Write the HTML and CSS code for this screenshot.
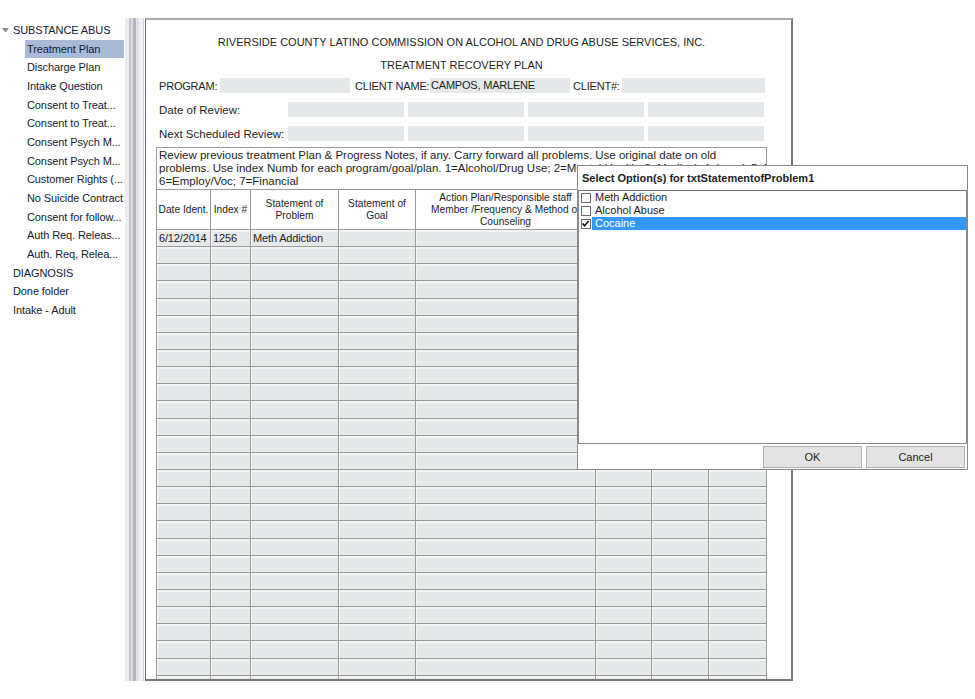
FILE: index.html
```html
<!DOCTYPE html>
<html>
<head>
<meta charset="utf-8">
<link rel="stylesheet" href="styles.css">
</head>
<body>
<div class="app">
  <nav class="tree">
    <div class="node root"><svg class="caret" width="7" height="5" viewBox="0 0 7 5"><polygon points="0,0 7,0 3.5,4.5" fill="#8a8a8a"/></svg>SUBSTANCE ABUS</div>
    <div class="node child selected">Treatment Plan</div>
    <div class="node child">Discharge Plan</div>
    <div class="node child">Intake Question</div>
    <div class="node child">Consent to Treat...</div>
    <div class="node child">Consent to Treat...</div>
    <div class="node child">Consent Psych M...</div>
    <div class="node child">Consent Psych M...</div>
    <div class="node child">Customer Rights (...</div>
    <div class="node child">No Suicide Contract</div>
    <div class="node child">Consent for follow...</div>
    <div class="node child">Auth Req. Releas...</div>
    <div class="node child">Auth. Req, Relea...</div>
    <div class="node root">DIAGNOSIS</div>
    <div class="node root">Done folder</div>
    <div class="node root">Intake - Adult</div>
  </nav>
  <div class="splitter"></div>
  <main class="doc">
    <div class="title">RIVERSIDE COUNTY LATINO COMMISSION ON ALCOHOL AND DRUG ABUSE SERVICES, INC.</div>
    <div class="subtitle">TREATMENT RECOVERY PLAN</div>
    <div class="form-row">
      <span class="lbl caps lbl-program">PROGRAM:</span>
      <span class="field f-program"></span>
      <span class="lbl caps lbl-name">CLIENT NAME:</span>
      <span class="field caps f-name">CAMPOS, MARLENE</span>
      <span class="lbl caps lbl-num">CLIENT#:</span>
      <span class="field f-num"></span>
    </div>
    <div class="form-row dates">
      <span class="lbl lbl-date">Date of Review:</span>
      <span class="field f-date"></span>
      <span class="field f-date"></span>
      <span class="field f-date"></span>
      <span class="field f-date"></span>
    </div>
    <div class="form-row dates">
      <span class="lbl lbl-date">Next Scheduled Review:</span>
      <span class="field f-date"></span>
      <span class="field f-date"></span>
      <span class="field f-date"></span>
      <span class="field f-date"></span>
    </div>
    <div class="plan">
      <div class="note">
        <div>Review previous treatment Plan &amp; Progress Notes, if any. Carry forward all problems. Use original date on old</div>
        <div>problems. Use index Numb for each program/goal/plan. 1=Alcohol/Drug Use; 2=Mental Health; 3=Medical; 4=Legal; 5=Family;</div>
        <div>6=Employ/Voc; 7=Financial</div>
      </div>
      <table class="grid">
        <colgroup>
          <col class="c-date"><col class="c-index"><col class="c-problem"><col class="c-goal">
          <col class="c-action"><col class="c-target"><col class="c-resolved"><col class="c-staff">
        </colgroup>
        <thead>
          <tr>
            <th>Date Ident.</th>
            <th>Index #</th>
            <th>Statement of<br>Problem</th>
            <th>Statement of<br>Goal</th>
            <th>Action Plan/Responsible staff<br>Member /Frequency &amp; Method of<br>Counseling</th>
            <th>Target Date</th>
            <th>Date Resolved</th>
            <th>Staff Initials</th>
          </tr>
        </thead>
        <tbody>
          <tr><td>6/12/2014</td><td>1256</td><td>Meth Addiction</td><td></td><td></td><td></td><td></td><td></td></tr>
          <tr><td></td><td></td><td></td><td></td><td></td><td></td><td></td><td></td></tr>
          <tr><td></td><td></td><td></td><td></td><td></td><td></td><td></td><td></td></tr>
          <tr><td></td><td></td><td></td><td></td><td></td><td></td><td></td><td></td></tr>
          <tr><td></td><td></td><td></td><td></td><td></td><td></td><td></td><td></td></tr>
          <tr><td></td><td></td><td></td><td></td><td></td><td></td><td></td><td></td></tr>
          <tr><td></td><td></td><td></td><td></td><td></td><td></td><td></td><td></td></tr>
          <tr><td></td><td></td><td></td><td></td><td></td><td></td><td></td><td></td></tr>
          <tr><td></td><td></td><td></td><td></td><td></td><td></td><td></td><td></td></tr>
          <tr><td></td><td></td><td></td><td></td><td></td><td></td><td></td><td></td></tr>
          <tr><td></td><td></td><td></td><td></td><td></td><td></td><td></td><td></td></tr>
          <tr><td></td><td></td><td></td><td></td><td></td><td></td><td></td><td></td></tr>
          <tr><td></td><td></td><td></td><td></td><td></td><td></td><td></td><td></td></tr>
          <tr><td></td><td></td><td></td><td></td><td></td><td></td><td></td><td></td></tr>
          <tr><td></td><td></td><td></td><td></td><td></td><td></td><td></td><td></td></tr>
          <tr><td></td><td></td><td></td><td></td><td></td><td></td><td></td><td></td></tr>
          <tr><td></td><td></td><td></td><td></td><td></td><td></td><td></td><td></td></tr>
          <tr><td></td><td></td><td></td><td></td><td></td><td></td><td></td><td></td></tr>
          <tr><td></td><td></td><td></td><td></td><td></td><td></td><td></td><td></td></tr>
          <tr><td></td><td></td><td></td><td></td><td></td><td></td><td></td><td></td></tr>
          <tr><td></td><td></td><td></td><td></td><td></td><td></td><td></td><td></td></tr>
          <tr><td></td><td></td><td></td><td></td><td></td><td></td><td></td><td></td></tr>
          <tr><td></td><td></td><td></td><td></td><td></td><td></td><td></td><td></td></tr>
          <tr><td></td><td></td><td></td><td></td><td></td><td></td><td></td><td></td></tr>
          <tr><td></td><td></td><td></td><td></td><td></td><td></td><td></td><td></td></tr>
          <tr><td></td><td></td><td></td><td></td><td></td><td></td><td></td><td></td></tr>
          <tr><td></td><td></td><td></td><td></td><td></td><td></td><td></td><td></td></tr>
        </tbody>
      </table>
    </div>
  </main>
  <div class="dialog">
    <div class="dlg-title">Select Option(s) for txtStatementofProblem1</div>
    <div class="dlg-list">
      <div class="opt"><span class="cb"></span><span class="opt-text">Meth Addiction</span></div>
      <div class="opt"><span class="cb"></span><span class="opt-text">Alcohol Abuse</span></div>
      <div class="opt checked"><span class="cb"><svg width="9" height="9" viewBox="0 0 9 9"><path d="M1.6 4.4 L3.6 6.7 L7.6 1.9" stroke="#111" stroke-width="1.6" fill="none"/></svg></span><span class="opt-text">Cocaine</span></div>
    </div>
    <div class="dlg-buttons">
      <button class="btn">OK</button>
      <button class="btn">Cancel</button>
    </div>
  </div>
</div>
</body>
</html>
```
FILE: styles.css
```css
html, body {
  margin: 0;
  padding: 0;
  background: #fff;
}
body {
  font-family: "Liberation Sans", Arial, sans-serif;
  color: #1b1b1b;
}
.app {
  position: relative;
  display: flex;
  align-items: flex-start;
  width: 975px;
  height: 699px;
  overflow: hidden;
}

/* ---------- tree ---------- */
.tree {
  width: 125px;
  flex: none;
  padding-top: 21px;
  font-size: 11px;
  letter-spacing: -0.1px;
  color: #131c33;
}
.node {
  height: 18.67px;
  line-height: 18.67px;
  white-space: nowrap;
  overflow: hidden;
}
.node.root {
  padding-left: 13px;
  position: relative;
}
.caret {
  position: absolute;
  left: 2px;
  top: 7px;
}
.node.child {
  margin-left: 25px;
  padding-left: 2px;
  width: 97px;
}
.node.selected {
  background: #a9bbd8;
  height: 18px;
  line-height: 18px;
  margin-top: 0.33px;
  margin-bottom: 0.34px;
}

/* ---------- splitter ---------- */
.splitter {
  width: 20px;
  flex: none;
  margin-top: 18px;
  height: 663px;
  background: linear-gradient(to right,
    #ececf1 0, #ececf1 4px,
    #c6c6ce 4px, #c6c6ce 6px,
    #dcdce2 6px, #dcdce2 8px,
    #b5b5bd 8px, #b5b5bd 11px,
    #e0e0e6 11px, #e0e0e6 14px,
    #f0f0f3 14px, #f0f0f3 18px,
    #d2d2d8 18px, #d2d2d8 19px,
    #fff 19px);
}

/* ---------- document ---------- */
.doc {
  flex: none;
  margin-top: 18px;
  width: 635px;
  height: 659px;
  border-top: 2px solid #a9a9a9;
  border-left: 1px solid #666;
  border-right: 2px solid #7a7a7a;
  border-bottom: 2px solid #777;
  overflow: hidden;
  padding-left: 10px;
  font-size: 11px;
  color: #1e1e1e;
}
.title,
.subtitle {
  width: 611px;
  text-align: center;
  height: 14px;
  line-height: 14px;
}
.title { margin-top: 15px; }
.subtitle { margin-top: 9px; }

.form-row {
  display: flex;
  align-items: center;
  height: 15px;
  margin-top: 6px;
  padding-left: 3px;
  font-size: 11.5px;
}
.form-row.dates {
  margin-top: 9px;
}
.lbl {
  white-space: nowrap;
  flex: none;
}
.caps {
  font-size: 11px;
  letter-spacing: -0.2px;
}
.field {
  flex: none;
  height: 15px;
  line-height: 15px;
  background: #e6e9ea;
  white-space: nowrap;
}
.lbl-program { width: 61px; }
.f-program { width: 130px; }
.lbl-name { width: 75px; margin-left: 5px; }
.f-name { width: 139px; padding-left: 1px; }
.lbl-num { width: 49px; margin-left: 3px; }
.f-num { width: 143px; }
.lbl-date { width: 129px; }
.f-date { width: 116px; margin-right: 4px; }

.plan {
  margin-top: 6px;
  width: 611px;
}
.note {
  border: 1px solid #9a9a9a;
  border-bottom: none;
  padding: 1px 0 0 2px;
  font-size: 11.5px;
  line-height: 13px;
  height: 42px;
  white-space: nowrap;
  overflow: hidden;
  box-sizing: border-box;
}
.grid {
  width: 611px;
  border-collapse: collapse;
  table-layout: fixed;
}
.c-date { width: 54px; }
.c-index { width: 40px; }
.c-problem { width: 88px; }
.c-goal { width: 77px; }
.c-action { width: 180px; }
.c-target { width: 56px; }
.c-resolved { width: 57px; }
.c-staff { width: 58px; }

.grid th {
  height: 39px;
  border: 1px solid #9a9a9a;
  font-weight: normal;
  font-size: 10.2px;
  line-height: 12px;
  padding: 0;
  text-align: center;
  vertical-align: middle;
  background: #fff;
  white-space: nowrap;
  overflow: hidden;
}
.grid td {
  height: 16.15px;
  border: 1px solid #9a9a9a;
  background: #e6e9ea;
  box-shadow: inset 0 2px 0 #f3f4f5, inset 1px 0 0 #f7f7f8;
  padding: 0 2px;
  font-size: 11px;
  letter-spacing: -0.15px;
  line-height: 16px;
  white-space: nowrap;
  overflow: hidden;
}

/* ---------- dialog ---------- */
.dialog {
  position: absolute;
  left: 577px;
  top: 165px;
  width: 389px;
  height: 303px;
  border: 1px solid #8a8a8a;
  background: #fff;
  display: flex;
  flex-direction: column;
  font-size: 11px;
  color: #1e1e1e;
}
.dlg-title {
  height: 24px;
  line-height: 24px;
  padding-left: 4px;
  font-weight: bold;
  font-size: 11px;
}
.dlg-list {
  flex: 1;
  border: 1px solid #8a8a8a;
  border-top-color: #6f6f6f;
}
.opt {
  display: flex;
  align-items: center;
  height: 13px;
}
.cb {
  flex: none;
  width: 8px;
  height: 8px;
  border: 1px solid #6a6a6a;
  background: #fff;
  margin: 0 1px 0 2px;
  position: relative;
}
.cb svg {
  position: absolute;
  left: -1px;
  top: -1px;
}
.opt-text {
  flex: 1;
  height: 13px;
  line-height: 12px;
  padding-left: 3px;
}
.opt.checked .opt-text {
  background: #3399ff;
  color: #fff;
}
.dlg-buttons {
  flex: none;
  height: 25px;
  box-sizing: border-box;
  padding: 2px 2px 0 0;
  display: flex;
  justify-content: flex-end;
  align-items: flex-start;
  gap: 4px;
}
.btn {
  width: 99px;
  height: 22px;
  border: 1px solid #b0b0b0;
  background: #e4e4e4;
  font-family: "Liberation Sans", Arial, sans-serif;
  font-size: 11px;
  color: #1e1e1e;
  padding: 0;
}
```
